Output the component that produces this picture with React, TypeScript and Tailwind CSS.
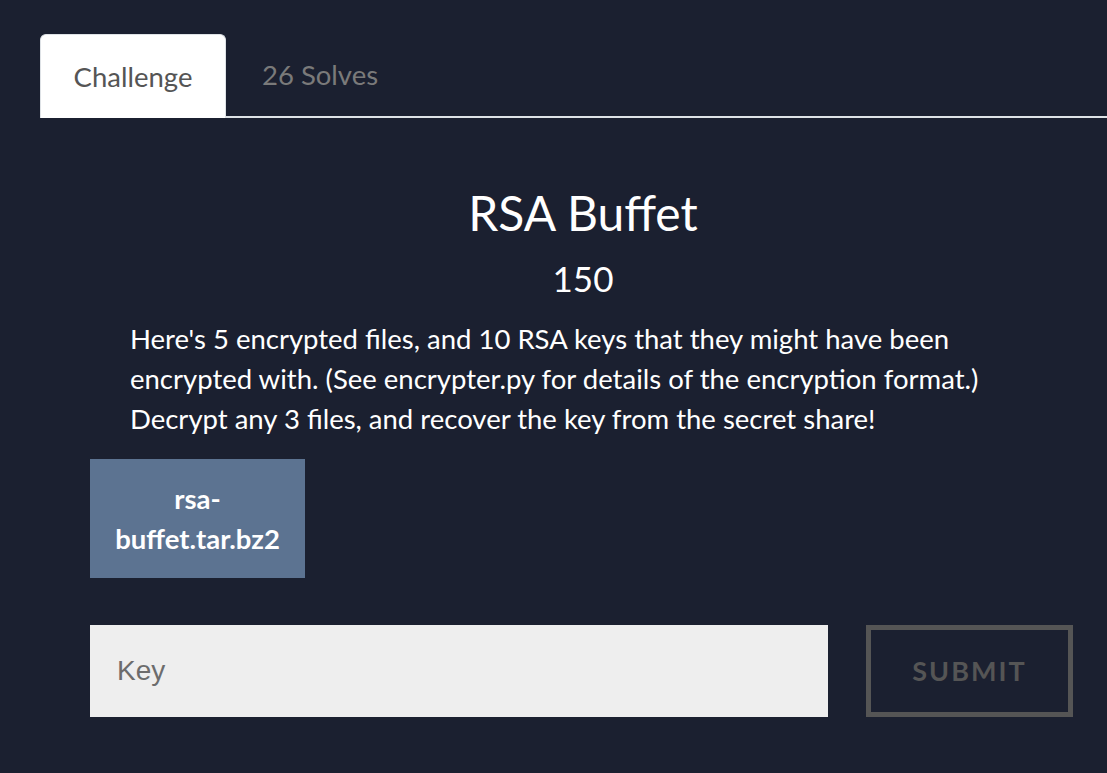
import React from 'react'

export default function App() {
  return (
    <div className="min-h-[773px] w-full bg-[#1b2030] pt-[34px] font-['Lato',sans-serif] overflow-hidden">
      {/* Tabs */}
      <div className="ml-[40px] flex border-b-2 border-[#dee2e6]">
        <div className="-mb-[2px] flex h-[84px] w-[186px] items-center justify-center rounded-t-md border border-b-0 border-[#dee2e6] bg-white text-[27.5px] text-[#555555]">
          Challenge
        </div>
        <div className="flex h-[82px] items-center pl-[36px] text-[27.5px] text-[#7a7a7a]">26 Solves</div>
      </div>

      <div className="ml-[90px] w-[986px]">
        <h1 className="mt-[67px] text-center text-[48px] leading-[56px] text-white">RSA Buffet</h1>
        <h2 className="mt-[17px] text-center text-[35px] leading-[40px] text-white">150</h2>
        <p className="mt-[21px] w-[890px] pl-[40px] text-[27.5px] leading-[40px] text-white">
          Here's 5 encrypted files, and 10 RSA keys that they might have been encrypted with. (See encrypter.py for
          details of the encryption format.) Decrypt any 3 files, and recover the key from the secret share!
        </p>

        <div className="mt-[20px] flex h-[119px] w-[215px] items-center justify-center bg-[#5c7391] px-2 text-center text-[27.5px] font-bold leading-[40px] text-white">
          rsa-
          <br />
          buffet.tar.bz2
        </div>

        <div className="mt-[47px] flex items-center gap-[38px]">
          <input
            placeholder="Key"
            className="h-[92px] w-[738px] bg-[#eeeeee] px-[27px] font-['Liberation_Sans',sans-serif] text-[28px] text-[#495057] placeholder:text-[#6c6c6c] outline-none"
          />
          <button className="h-[92px] w-[207px] border-[5px] border-[#555555] text-[27px] font-bold tracking-[2px] text-[#555555]">
            SUBMIT
          </button>
        </div>
      </div>
    </div>
  )
}
